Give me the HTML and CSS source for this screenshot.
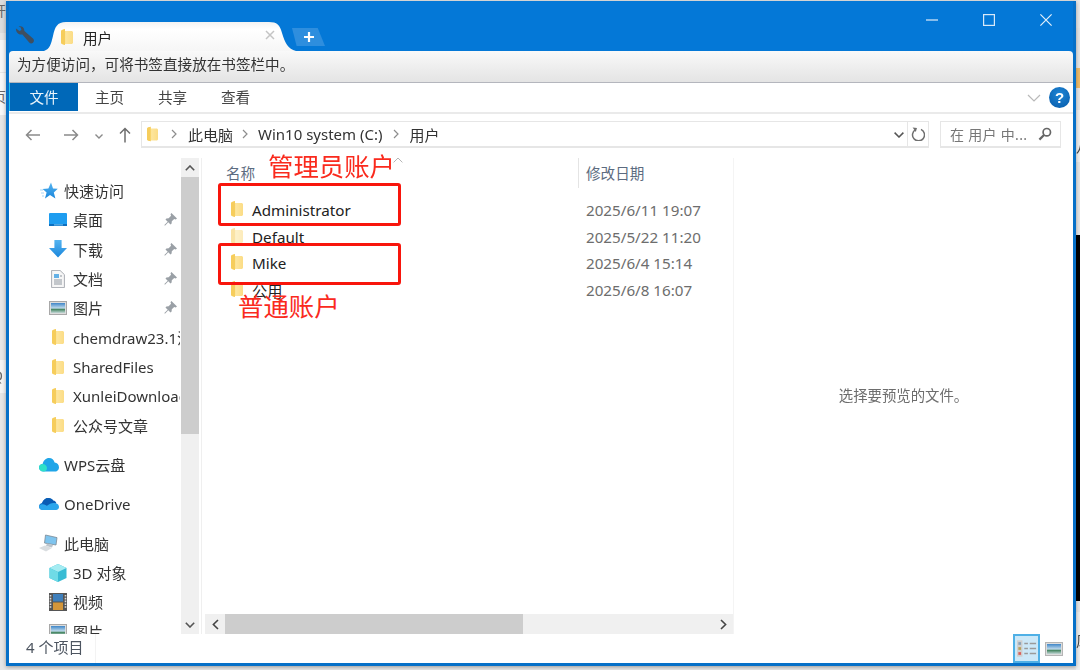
FILE: index.html
```html
<!DOCTYPE html>
<html lang="zh-CN">
<head>
<meta charset="utf-8">
<title>用户</title>
<link rel="stylesheet" href="styles.css">
</head>
<body>
<svg class="defs" width="0" height="0" aria-hidden="true">
  <defs>
    <linearGradient id="fold" x1="0" x2="1" y1="0" y2="0"><stop offset="0" stop-color="#f8d773"/><stop offset=".45" stop-color="#fde59c"/><stop offset="1" stop-color="#fbdc85"/></linearGradient>
    <linearGradient id="blu" x1="0" x2="0" y1="0" y2="1"><stop offset="0" stop-color="#55b4f0"/><stop offset="1" stop-color="#1a86dc"/></linearGradient>
    <linearGradient id="pic" x1="0" x2="0" y1="0" y2="1"><stop offset="0" stop-color="#3f86c8"/><stop offset=".5" stop-color="#bcd8ea"/><stop offset=".65" stop-color="#4c8a68"/><stop offset="1" stop-color="#c5d8d8"/></linearGradient>
    <symbol id="i-folder" viewBox="0 0 12 16"><path d="M0 2 L1 1 L4 0 L4 2 L11 2 L12 3 L12 14 L11 15 L4 15 L4 16 L1 15 L0 14Z" fill="url(#fold)"/><path d="M0 2 L1 1 L4 0 L4 16 L1 15 L0 14Z" fill="#f6cd5c"/></symbol>
    <symbol id="i-pin" viewBox="0 0 14 14"><path d="M8 0 L14 6 L12.6 7 L11 6.4 L8.4 9 L8.2 11.4 L7 12.4 L4.6 10 L1 13.6 L.4 13 L4 9.4 L1.6 7 L2.6 5.8 L5 5.6 L7.6 3 L7 1.4Z" fill="#9aa0a6"/></symbol>
  </defs>
</svg>

<div class="backdrop">
  <div class="bd bd-l1"><span>开</span></div>
  <div class="bd bd-l2"><span>t</span></div>
  <div class="bd bd-l3"><span>页</span></div>
  <div class="bd bd-l4"><span>Q</span></div>
  <div class="bd bd-r1"></div>
  <div class="bd bd-r2"></div>
  <div class="bd bd-r3"><span>八</span></div>
  <div class="bd bd-black"></div>
  <div class="bd bd-r4"><span>风</span></div>
</div>

<main class="window">
  <header class="titlebar">
    <svg class="wrench" viewBox="0 0 20 18" width="20" height="18"><path d="M1 2.5 L4.5 5 L6.4 4 L5.8 1.6 L3.6 .4 C6 -.4 8.6 .6 9 3 L9.4 5 L18 12.4 C19.6 14 18.8 16 18 16.8 C17 17.6 15.4 17.8 14.2 16.6 L7.4 8.4 L5 8.4 C2.4 8 .6 5.4 1 2.5Z" fill="#3f4f60"/></svg>
    <div class="tab">
      <svg class="tab-shape" viewBox="0 0 252 30" preserveAspectRatio="none"><defs><linearGradient id="tabg" x1="0" x2="0" y1="0" y2="1"><stop offset="0" stop-color="#f3f3f3"/><stop offset=".25" stop-color="#fff"/><stop offset="1" stop-color="#f6f6f6"/></linearGradient></defs><path d="M0 30 C6 28 7 23 9 15 C11 6 13 1 22 1 L225 1 C233 1 236 4 238 12 C241 22 244 28 252 30Z" fill="url(#tabg)"/></svg>
      <svg class="tab-folder"><use href="#i-folder"/></svg>
      <span class="tab-title">用户</span>
      <svg class="tab-close" viewBox="0 0 10 10" width="10" height="10"><path d="M1 1 L9 9 M9 1 L1 9" stroke="#c4c4c4" stroke-width="1.5"/></svg>
    </div>
    <div class="newtab"><svg viewBox="0 0 10 10" width="10" height="10"><path d="M5 0 V10 M0 5 H10" stroke="#fff" stroke-width="2.2"/></svg></div>
    <div class="winctl">
      <svg viewBox="0 0 14 14" width="14" height="14"><path d="M1 7 H13" stroke="#cfe4f6" stroke-width="1.3"/></svg>
      <svg viewBox="0 0 14 14" width="14" height="14"><rect x="1.6" y="1.6" width="10.8" height="10.8" fill="none" stroke="#d8e9f8" stroke-width="1.2"/></svg>
      <svg viewBox="0 0 14 14" width="14" height="14"><path d="M1.4 1.4 L12.6 12.6 M12.6 1.4 L1.4 12.6" stroke="#e4f0fa" stroke-width="1.2"/></svg>
    </div>
  </header>

  <div class="bookmarks">为方便访问，可将书签直接放在书签栏中。</div>

  <nav class="ribbon">
    <span class="rtab rtab-file">文件</span>
    <span class="rtab">主页</span>
    <span class="rtab">共享</span>
    <span class="rtab">查看</span>
    <svg class="rchev" viewBox="0 0 14 8" width="14" height="8"><path d="M1 1 L7 7 L13 1" fill="none" stroke="#b9b9b9" stroke-width="1.2"/></svg>
    <div class="help">?</div>
  </nav>

  <div class="navbar">
    <svg class="nb nb-back" viewBox="0 0 16 12" width="16" height="12"><path d="M15 6 H1.5 M6.5 1 L1.5 6 L6.5 11" fill="none" stroke="#8a8a8a" stroke-width="1.5"/></svg>
    <svg class="nb nb-fwd" viewBox="0 0 16 12" width="16" height="12"><path d="M1 6 H14.5 M9.5 1 L14.5 6 L9.5 11" fill="none" stroke="#8a8a8a" stroke-width="1.5"/></svg>
    <svg class="nb nb-down" viewBox="0 0 8 5" width="8" height="5"><path d="M.5 .5 L4 4 L7.5 .5" fill="none" stroke="#8a8a8a" stroke-width="1.4"/></svg>
    <svg class="nb nb-up" viewBox="0 0 12 16" width="12" height="16"><path d="M6 15.5 V1.5 M1 6.5 L6 1.5 L11 6.5" fill="none" stroke="#6e6e6e" stroke-width="1.5"/></svg>
    <div class="address">
      <svg class="addr-folder"><use href="#i-folder"/></svg>
      <svg class="crumb-sep sep1" viewBox="0 0 6 10" width="6" height="10"><path d="M1 1 L5 5 L1 9" fill="none" stroke="#8d8d8d" stroke-width="1.2"/></svg>
      <span class="crumb">此电脑</span>
      <svg class="crumb-sep sep2" viewBox="0 0 6 10" width="6" height="10"><path d="M1 1 L5 5 L1 9" fill="none" stroke="#8d8d8d" stroke-width="1.2"/></svg>
      <span class="crumb">Win10 system (C:)</span>
      <svg class="crumb-sep" viewBox="0 0 6 10" width="6" height="10"><path d="M1 1 L5 5 L1 9" fill="none" stroke="#8d8d8d" stroke-width="1.2"/></svg>
      <span class="crumb">用户</span>
      <svg class="addr-chev" viewBox="0 0 10 6" width="10" height="6"><path d="M.6 .6 L5 5 L9.4 .6" fill="none" stroke="#555" stroke-width="1.5"/></svg>
      <div class="addr-refresh"><svg viewBox="0 0 14 14" width="14" height="14"><path d="M4.6 2 A6 6 0 1 0 10 1.8" fill="none" stroke="#6f6f6f" stroke-width="1.5" transform="translate(0 .6)"/><path d="M1.6 .6 L6 1 L4.8 5Z" fill="#6f6f6f"/></svg></div>
    </div>
    <div class="search">
      <span>在 用户 中...</span>
      <svg viewBox="0 0 14 14" width="14" height="14"><circle cx="8.8" cy="5.2" r="3.7" fill="none" stroke="#666" stroke-width="1.7"/><path d="M6 8 L1.4 12.6" stroke="#666" stroke-width="2.2"/></svg>
    </div>
  </div>

  <section class="main">
    <aside class="tree">
      <div class="tree-list">
        <div class="row head"><svg class="ic" viewBox="0 0 18 18"><path d="M11 .5 L13 6.5 L17.8 6.8 L13.8 10.4 L15.4 16.4 L10 13 L5 16.4 L6.6 10.6 L2.6 7 L8.4 6.6Z" fill="url(#blu)"/><path d="M0 8 H3 M1 11 H4 M2 14 H4" stroke="#a9d6f5" stroke-width="1"/></svg><span>快速访问</span></div>
        <div class="row sub"><svg class="ic" viewBox="0 0 18 18"><rect y="2" width="18" height="13" rx="1" fill="#1e9df0"/><rect y="13" width="18" height="2" fill="#0c6fc0"/><rect x="5" y="13.4" width="9" height="1" fill="#7cc8f6"/></svg><span>桌面</span><svg class="pin"><use href="#i-pin"/></svg></div>
        <div class="row sub"><svg class="ic" viewBox="0 0 18 18"><path d="M5.4 0 H12.6 V8 H18 L9 17.6 L0 8 H5.4Z" fill="url(#blu)"/></svg><span>下载</span><svg class="pin"><use href="#i-pin"/></svg></div>
        <div class="row sub"><svg class="ic" viewBox="0 0 18 18"><path d="M2.6 .4 H11 L15.4 4.6 V17.6 H2.6Z" fill="#f6f6f6" stroke="#a9adb3"/><rect x="5" y="4" width="5" height="4" fill="#63b0e6"/><path d="M5 10 H13 M5 12 H13 M5 14 H13 M11 6 H13" stroke="#8f97a0" stroke-width="1"/></svg><span>文档</span><svg class="pin"><use href="#i-pin"/></svg></div>
        <div class="row sub"><svg class="ic" viewBox="0 0 18 18"><rect x=".5" y="2.5" width="17" height="13" fill="#ddd" stroke="#a8a8a8"/><rect x="2" y="4" width="14" height="10" fill="url(#pic)"/></svg><span>图片</span><svg class="pin"><use href="#i-pin"/></svg></div>
        <div class="row sub"><svg class="ic-f"><use href="#i-folder"/></svg><span>chemdraw23.1注册</span></div>
        <div class="row sub"><svg class="ic-f"><use href="#i-folder"/></svg><span>SharedFiles</span></div>
        <div class="row sub"><svg class="ic-f"><use href="#i-folder"/></svg><span>XunleiDownload</span></div>
        <div class="row sub"><svg class="ic-f"><use href="#i-folder"/></svg><span>公众号文章</span></div>
        <div class="row head gap"><svg class="ic ic-w" viewBox="0 0 20 16"><path d="M4.6 14.6 C1.6 14.6 0 12.8 0 10.6 C0 8.4 1.6 7 3.6 7 C4.4 3.4 7 1 10 1 C13 1 15 3 15.6 5.6 C18.2 5.8 20 8 20 10.4 C20 12.8 18 14.6 15.4 14.6Z" fill="#1fa5e8"/><path d="M0 10.6 C0 8.4 1.6 7 3.6 7 C6 7 8 9 8 11 C8 13 6.6 14.6 4.6 14.6 C1.6 14.6 0 12.8 0 10.6Z" fill="#2ee0c8"/></svg><span>WPS云盘</span></div>
        <div class="row head gap"><svg class="ic ic-w" viewBox="0 0 20 14"><path d="M8 9 L3.6 13 C1.4 13 0 11.4 0 9.6 C0 7.6 1.4 6.2 3.2 6 C4 3 6.4 1 9.4 1 C11.4 1 13.2 2 14.2 3.6Z" fill="#0f6fc8"/><path d="M14.2 3.6 C16 3.8 17 5 17.4 6.4 L8 9 L3 6 C4 3 6.4 1 9.4 1 C11.4 1 13.2 2 14.2 3.6Z" fill="#0a5cb4"/><path d="M3.6 13 H17 C18.8 13 20 11.6 20 10 C20 8.2 18.8 6.8 17 6.5 C14 5.4 10.6 6.4 8 9 C6 7.6 3 6.6 .6 8 C0 9 0 10 .4 11 C1 12.2 2.2 13 3.6 13Z" fill="#2ba6ec"/></svg><span>OneDrive</span></div>
        <div class="row head gap"><svg class="ic ic-w" viewBox="0 0 20 18"><path d="M6.5 1 L18 3.6 L17 11 L5.5 9Z" fill="#7fc4ee" stroke="#7d8a96" stroke-width=".8"/><path d="M8 9.5 L14 11 L13 13.5 L7 12Z" fill="#bcc4cb"/><path d="M0 14 L6 11.5 L13 14 L7 17.4Z" fill="#d9dde0"/></svg><span>此电脑</span></div>
        <div class="row sub"><svg class="ic" viewBox="0 0 18 18"><path d="M9 0 L17.5 4 V14 L9 18 L.5 14 V4Z" fill="#38bcd4"/><path d="M9 0 L17.5 4 L9 8 L.5 4Z" fill="#a5ecf2"/><path d="M.5 4 L9 8 V18 L.5 14Z" fill="#6fdbe6"/></svg><span>3D 对象</span></div>
        <div class="row sub"><svg class="ic" viewBox="0 0 18 18"><rect width="18" height="18" fill="#555"/><rect x="4" y="1" width="10" height="7.5" fill="#3f7fbb"/><rect x="4" y="9.5" width="10" height="7.5" fill="#d4963a"/><path d="M1.5 2 V16 M16.5 2 V16" stroke="#ddd" stroke-width="1.6" stroke-dasharray="1.6 1.2"/></svg><span>视频</span></div>
        <div class="row sub"><svg class="ic" viewBox="0 0 18 18"><rect x=".5" y="2.5" width="17" height="13" fill="#ddd" stroke="#a8a8a8"/><rect x="2" y="4" width="14" height="10" fill="url(#pic)"/></svg><span>图片</span></div>
      </div>
      <div class="vscroll">
        <div class="sbtn"><svg viewBox="0 0 10 6" width="10" height="6"><path d="M.8 5.2 L5 1 L9.2 5.2" fill="none" stroke="#555" stroke-width="1.6"/></svg></div>
        <div class="vthumb"></div>
        <div class="vtrack"></div>
        <div class="sbtn"><svg viewBox="0 0 10 6" width="10" height="6"><path d="M.8 .8 L5 5 L9.2 .8" fill="none" stroke="#555" stroke-width="1.6"/></svg></div>
      </div>
    </aside>

    <div class="files">
      <div class="cols">
        <div class="col col-name">名称</div>
        <div class="col col-date">修改日期</div>
      </div>
      <div class="list">
        <div class="frow"><svg class="f-ic"><use href="#i-folder"/></svg><span class="f-name">Administrator</span><span class="f-date">2025/6/11 19:07</span></div>
        <div class="frow"><svg class="f-ic f-faded"><use href="#i-folder"/></svg><span class="f-name">Default</span><span class="f-date">2025/5/22 11:20</span></div>
        <div class="frow"><svg class="f-ic"><use href="#i-folder"/></svg><span class="f-name">Mike</span><span class="f-date">2025/6/4 15:14</span></div>
        <div class="frow"><svg class="f-ic"><use href="#i-folder"/></svg><span class="f-name">公用</span><span class="f-date">2025/6/8 16:07</span></div>
      </div>
      <div class="hscroll">
        <div class="hbtn"><svg viewBox="0 0 7 11" width="7" height="11"><path d="M6 1 L1.4 5.5 L6 10" fill="none" stroke="#444" stroke-width="1.6"/></svg></div>
        <div class="hthumb"></div>
        <div class="htrack"></div>
        <div class="hbtn"><svg viewBox="0 0 7 11" width="7" height="11"><path d="M1 1 L5.6 5.5 L1 10" fill="none" stroke="#444" stroke-width="1.6"/></svg></div>
      </div>
      <svg class="sort" viewBox="0 0 10 6" width="10" height="6"><path d="M.6 5.4 L5 1 L9.4 5.4" fill="none" stroke="#b5b5b5" stroke-width="1"/></svg>
      <div class="mark mark-a"></div>
      <div class="mark mark-b"></div>
      <div class="note note-a">管理员账户</div>
      <div class="note note-b">普通账户</div>
    </div>

    <div class="preview">选择要预览的文件。</div>
  </section>

  <footer class="status">
    <span class="count">4 个项目</span>
    <div class="views">
      <div class="view view-on"><svg viewBox="0 0 22 18" width="20" height="17"><rect x="0" y="0" width="6" height="18" fill="#cfcfcf"/><rect x="1.5" y="2" width="3" height="3" fill="#8aa2b8"/><rect x="1.5" y="7.5" width="3" height="3" fill="#b6a25a"/><rect x="1.5" y="13" width="3" height="3" fill="#d9605a"/><path d="M8 3.5 H12 M14 3.5 H21 M8 9 H12 M14 9 H21 M8 14.5 H12 M14 14.5 H21" stroke="#9a9a9a" stroke-width="1.6"/></svg></div>
      <div class="view"><svg viewBox="0 0 18 14" width="18" height="14"><rect x=".5" y=".5" width="17" height="13" fill="#ddd" stroke="#b4b4b4"/><rect x="2" y="2" width="14" height="10" fill="url(#pic)"/></svg></div>
    </div>
  </footer>
</main>
</body>
</html>
```

FILE: styles.css
```css
* { box-sizing: border-box; }
html, body { margin: 0; padding: 0; }
body {
  position: relative;
  width: 1080px;
  height: 670px;
  overflow: hidden;
  background: #e6e6e6;
  font-family: "Noto Sans", "Noto Sans CJK SC", sans-serif;
  font-size: 15px;
  color: #222;
}
.defs { position: absolute; }

/* what lies behind the window */
.backdrop { position: absolute; inset: 0; filter: blur(.6px); }
.bd { position: absolute; font-size: 14px; color: #666; overflow: hidden; }
.bd-l1 { left: 0; top: 0; width: 6px; height: 33px; background: #dcdcdc; }
.bd-l2 { left: 0; top: 40px; width: 6px; height: 32px; background: #f6f6f6; padding-top: 6px; }
.bd-l3 { left: 0; top: 73px; width: 6px; height: 42px; background: #f8f8f8; padding-top: 13px; }
.bd-l4 { left: 0; top: 360px; width: 6px; height: 33px; background: #f4f4f4; padding-top: 6px; }
.bd-l1 span, .bd-l2 span, .bd-l3 span, .bd-l4 span { margin-left: -8px; }
.bd-r1 { left: 1076px; top: 0; width: 4px; height: 28px; background: #e9e9e9; }
.bd-r2 { left: 1076px; top: 68px; width: 4px; height: 20px; background: #eebc6c; }
.bd-r3 { left: 1076px; top: 110px; width: 4px; height: 52px; background: #f0f0f0; padding-top: 26px; color: #444; }
.bd-black { left: 1076px; top: 235px; width: 4px; height: 366px; background: #000; }
.bd-r4 { left: 1076px; top: 612px; width: 4px; height: 58px; background: #eee; padding-top: 18px; color: #444; }

/* window */
.window {
  position: absolute;
  left: 6px;
  top: 1px;
  width: 1070px;
  height: 665px;
  display: flex;
  flex-direction: column;
  background: #0478d7;
  border-left: 3px solid #0670c8;
  border-right: 3px solid #0670c8;
  border-bottom: 3px solid #0670c8;
  box-shadow: 0 1px 4px rgba(0,0,0,.35);
  filter: blur(.35px);
}

.titlebar { height: 50px; display: flex; align-items: flex-end; flex: none; }
.wrench { flex: none; margin: 0 0 7px 6px; }
.tab {
  position: relative;
  flex: none;
  width: 252px;
  height: 30px;
  margin-left: 9px;
  display: flex;
  align-items: center;
  padding-top: 2px;
}
.tab-shape { position: absolute; inset: 0; width: 100%; height: 100%; }
.tab-folder { position: relative; width: 12px; height: 16px; margin-left: 17px; flex: none; }
.tab-title { position: relative; margin-left: 10px; font-size: 14.6px; color: #222; }
.tab-close { position: relative; margin-left: auto; margin-right: 21px; margin-top: -5px; }
.newtab {
  flex: none;
  width: 33px;
  height: 18px;
  margin: 0 0 5px -4px;
  background: #2e8ede;
  clip-path: polygon(0 0, 78% 0, 100% 100%, 14% 100%);
  display: flex;
  align-items: center;
  justify-content: center;
}
.winctl { margin-left: auto; align-self: flex-start; display: flex; gap: 43px; margin-top: 12px; margin-right: 20px; }
.winctl svg { flex: none; }

.bookmarks {
  flex: none;
  height: 32px;
  background: linear-gradient(#f9f9f9, #e4e4e4);
  border-radius: 4px 4px 0 0;
  border-bottom: 1px solid #b4b6bd;
  padding: 1px 0 0 8px;
  font-size: 14.6px;
  line-height: 24px;
  color: #333;
}

.ribbon {
  flex: none;
  height: 31px;
  background: #fff;
  border-bottom: 2px solid #eaeaea;
  display: flex;
  align-items: flex-start;
}
.rtab { width: 63px; height: 28px; line-height: 29px; text-align: center; color: #444; font-size: 14.6px; flex: none; }
.rtab-file { width: 69px; background: #0068b8; color: #eaf4fb; border-left: 1px solid #25c3ee; }
.rchev { margin: 11px 0 0 auto; }
.help {
  width: 21px;
  height: 21px;
  border-radius: 50%;
  margin: 4px 3px 0 8px;
  background: radial-gradient(circle at 50% 35%, #1f86d6, #0559a8);
  color: #fff;
  font: bold 15px/21px "Liberation Sans", sans-serif;
  text-align: center;
}

.navbar { flex: none; height: 44px; background: #fff; display: flex; align-items: center; padding: 0 0 2px 16px; }
.nb { flex: none; }
.nb-fwd { margin-left: 22px; }
.nb-down { margin-left: 16px; margin-top: 3px; }
.nb-up { margin-left: 16px; }
.address {
  flex: none;
  width: 788px;
  height: 27px;
  margin-left: 10px;
  margin-top: -1px;
  border: 1px solid #e6e6e6;
  border-bottom-width: 2px;
  display: flex;
  align-items: center;
  font-size: 15px;
  color: #333;
}
.addr-folder { width: 11px; height: 16px; margin-left: 5px; flex: none; }
.crumb-sep { flex: none; margin: 0 11px 0 10px; }
.sep1 { margin-left: 13px; }
.sep2 { margin: 0 10px 0 9px; }
.addr-chev { margin-left: auto; margin-right: 3px; margin-top: 1px; }
.addr-refresh { width: 21px; height: 100%; border-left: 1px solid #e6e6e6; display: flex; align-items: center; justify-content: center; }
.search {
  flex: none;
  width: 121px;
  height: 27px;
  margin-left: 11px;
  margin-top: -1px;
  border: 1px solid #e6e6e6;
  border-bottom-width: 2px;
  display: flex;
  align-items: center;
  justify-content: space-between;
  padding: 0 8px 0 9px;
  color: #777;
  font-size: 14px;
  letter-spacing: .3px;
  white-space: nowrap;
}

.main { flex: 1; min-height: 0; display: flex; background: #fff; }
.tree { flex: none; width: 190px; display: flex; }
.tree-list { flex: none; width: 172px; padding-top: 18px; overflow: hidden; }
.row { width: 171px; height: 29.33px; display: flex; align-items: center; white-space: nowrap; color: #333; position: relative; overflow: hidden; }
.row.head { padding-left: 31px; }
.row.sub { padding-left: 40px; }
.row.gap { margin-top: 10px; }
.ic { width: 18px; height: 18px; flex: none; margin-right: 6px; }
.ic-w { width: 20px; margin-left: -1px; margin-right: 5px; }
.ic-f { width: 12px; height: 16px; flex: none; margin: 0 9px 0 3px; }
.pin { position: absolute; left: 155px; width: 13px; height: 13px; top: 8px; }
.vscroll { flex: none; width: 18px; display: flex; flex-direction: column; background: #f0f0f0; }
.sbtn { flex: none; height: 19px; display: flex; align-items: center; justify-content: center; background: #f0f0f0; }
.vthumb { flex: none; height: 257px; background: #cdcdcd; }
.vtrack { flex: 1; }

.files {
  position: relative;
  flex: none;
  width: 534px;
  padding-left: 6px;
  display: flex;
  flex-direction: column;
  background: linear-gradient(90deg, #fff 2.5px, #efefef 2.5px, #efefef 3.5px, #fff 3.5px);
}
.cols { flex: none; height: 30px; display: flex; color: #5c6b80; font-size: 14.6px; }
.col { line-height: 30px; }
.col-name { width: 373px; padding-left: 21px; }
.col-date { flex: 1; padding-left: 7px; border-left: 1px solid #e4e4e4; }
.list { flex: 1; min-height: 0; padding-top: 9px; }
.frow { height: 26.5px; display: flex; align-items: center; position: relative; font-size: 15.2px; color: #222; white-space: nowrap; }
.f-ic { position: absolute; left: 25px; top: 4px; width: 14px; height: 16px; }
.f-faded { opacity: .55; }
.f-name { width: 381px; padding-left: 47px; }
.f-date { color: #6d6d6d; }
.hscroll { flex: none; height: 20px; display: flex; background: #f0f0f0; }
.hbtn { flex: none; width: 20px; display: flex; align-items: center; justify-content: center; }
.hthumb { flex: none; width: 298px; background: #cdcdcd; }
.htrack { flex: 1; }

/* annotations drawn over the list */
.sort { position: absolute; left: 194px; top: -1px; }
.mark { position: absolute; left: 19px; width: 183px; border: 3px solid #f8150c; border-radius: 3px; }
.mark-a { top: 25px; height: 43px; }
.mark-b { top: 85px; height: 42px; }
.note { position: absolute; color: #fa2a1d; font-size: 25.4px; line-height: 30px; font-family: "Noto Sans CJK SC", sans-serif; white-space: nowrap; }
.note-a { left: 69px; top: -8px; }
.note-b { left: 39px; top: 132px; }

.preview {
  flex: 1;
  border-left: 1px solid #f4f4f4;
  display: flex;
  justify-content: center;
  align-items: flex-start;
  padding-top: 226px;
  font-size: 14.4px;
  color: #6d6d6d;
}

.status { flex: none; height: 29px; background: #fff; display: flex; align-items: stretch; padding-left: 17px; }
.count { line-height: 27px; color: #4d5560; padding-right: 12px; border-right: 1px solid #f3f3f3; }
.views { margin-left: auto; display: flex; margin-right: 7px; gap: 2px; }
.view { width: 24px; display: flex; align-items: center; justify-content: center; }
.view-on { width: 27px; background: #cce8f8; border: 2px solid #4fb0e6; }
```
